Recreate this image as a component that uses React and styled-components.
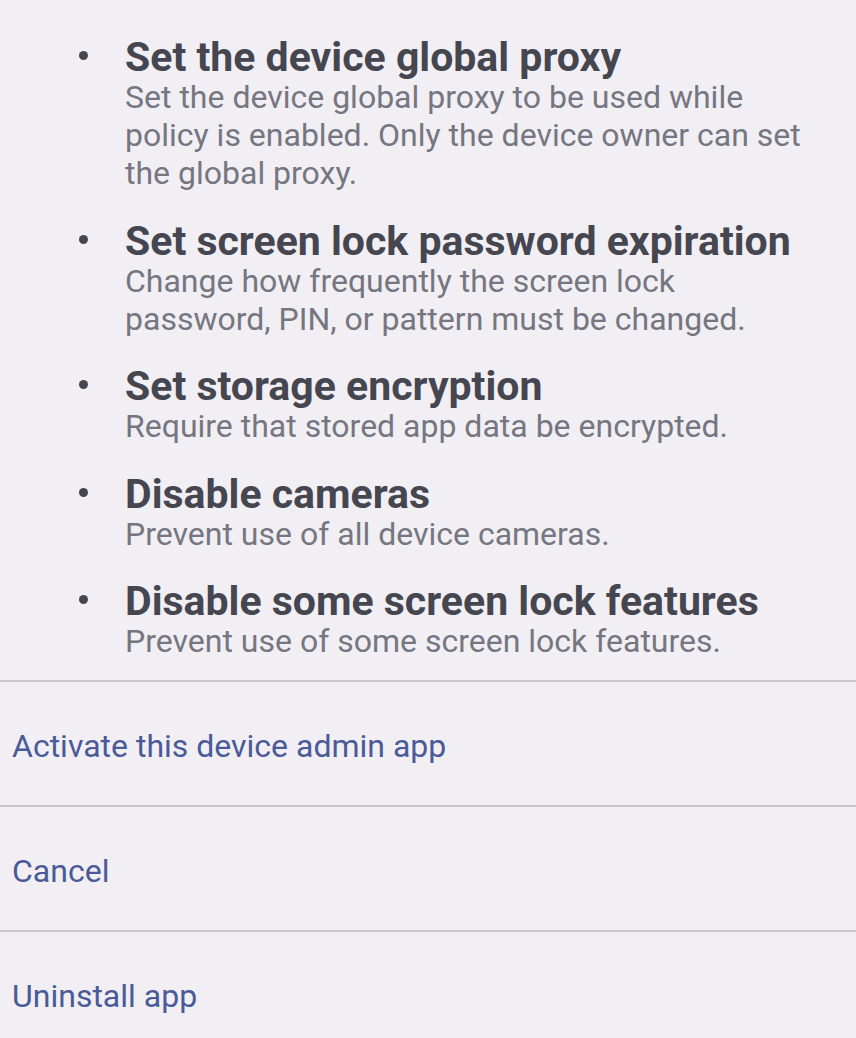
import React from "react";
import styled, { createGlobalStyle } from "styled-components";

const GlobalStyle = createGlobalStyle`
  html, body {
    margin: 0;
    padding: 0;
    background: #f1eff4;
  }
  body {
    font-family: Roboto, "Noto Sans", sans-serif;
  }
`;

const Page = styled.div`
  width: 856px;
  min-height: 1038px;
  background: #f1eff4;
  display: flex;
  flex-direction: column;
`;

const PolicyList = styled.ul`
  list-style: none;
  margin: 0;
  padding: 36px 0 20px 0;
  display: flex;
  flex-direction: column;
  gap: 27.5px;
`;

const PolicyItem = styled.li`
  display: grid;
  grid-template-columns: 125px 688px;
  align-items: start;
`;

const Bullet = styled.span`
  display: block;
  justify-self: start;
  margin: 15px 0 0 79px;
  width: 9px;
  height: 9px;
  border-radius: 50%;
  background: #45464f;
`;

const PolicyText = styled.div`
  display: flex;
  flex-direction: column;
`;

const Title = styled.div`
  font-size: 41px;
  line-height: 42px;
  font-weight: 700;
  color: #45464f;
  white-space: nowrap;
`;

const Description = styled.div`
  font-size: 32px;
  line-height: 38px;
  color: #767680;
`;

const Divider = styled.div`
  height: 2px;
  background: #c8c6cb;
`;

const ActionButton = styled.button`
  display: flex;
  align-items: center;
  height: 123px;
  padding: 4px 12px 0;
  border: none;
  background: transparent;
  font-family: Roboto, "Noto Sans", sans-serif;
  font-size: 32px;
  color: #4a5a98;
  text-align: left;
  cursor: pointer;
`;

const policies = [
  {
    title: "Set the device global proxy",
    desc: "Set the device global proxy to be used while policy is enabled. Only the device owner can set the global proxy.",
  },
  {
    title: "Set screen lock password expiration",
    desc: "Change how frequently the screen lock password, PIN, or pattern must be changed.",
  },
  {
    title: "Set storage encryption",
    desc: "Require that stored app data be encrypted.",
  },
  {
    title: "Disable cameras",
    desc: "Prevent use of all device cameras.",
  },
  {
    title: "Disable some screen lock features",
    desc: "Prevent use of some screen lock features.",
  },
];

const actions = ["Activate this device admin app", "Cancel", "Uninstall app"];

export default function App() {
  return (
    <Page>
      <GlobalStyle />
      <PolicyList>
        {policies.map((p) => (
          <PolicyItem key={p.title}>
            <Bullet />
            <PolicyText>
              <Title>{p.title}</Title>
              <Description>{p.desc}</Description>
            </PolicyText>
          </PolicyItem>
        ))}
      </PolicyList>
      {actions.map((a) => (
        <React.Fragment key={a}>
          <Divider />
          <ActionButton>{a}</ActionButton>
        </React.Fragment>
      ))}
    </Page>
  );
}
